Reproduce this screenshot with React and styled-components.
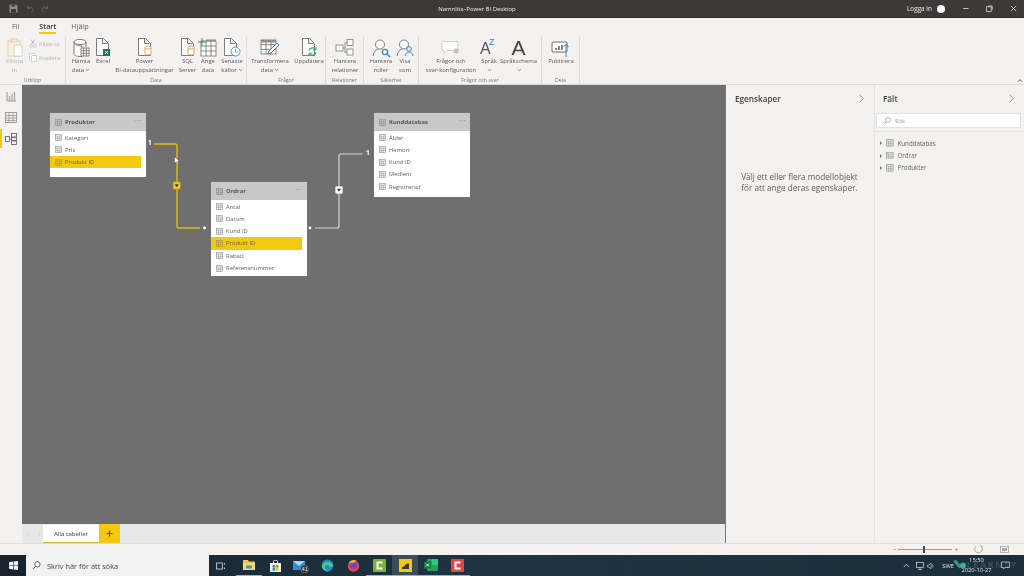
import React from "react";
import styled, { createGlobalStyle } from "styled-components";

const Global = createGlobalStyle`
  html, body { margin: 0; padding: 0; background: #f3f2f1; }
  #root { width: 1024px; height: 576px; overflow: hidden; }
  * { box-sizing: border-box; }
`;

const Page = styled.div`
  width: 1024px; height: 576px; display: flex; flex-direction: column;
  font-family: "Open Sans", "Noto Sans", sans-serif; color: #555;
  background: #f3f2f1; overflow: hidden; filter: blur(0.4px);
`;

/* Title bar */
const TitleBar = styled.div`
  height: 18px; flex: none; background: #3b3a39; display: flex; align-items: center;
  padding-left: 9px; color: #f3f2f1; font-size: 6px; border-bottom: 1px solid #2f2e2d;
`;
const QuickIcons = styled.div`display: flex; gap: 7.5px; width: 240px; align-items: center;`;
const Title = styled.div`width: 456px; text-align: center;`;
const Login = styled.div`margin-left: 202px; width: 25px; white-space: nowrap; font-size: 6.4px;`;
const Avatar = styled.div`width: 8px; height: 8px; margin-left: 5px; border-radius: 50%; background: #fff;`;
const WinButtons = styled.div`display: flex; margin-left: 16.5px; gap: 17px; align-items: center;`;

/* Ribbon */
const Ribbon = styled.div`
  height: 67px; flex: none; background: #f3f2f1; border-bottom: 1px solid #dcdbda;
  display: flex; flex-direction: column; position: relative;
`;
const TabRow = styled.div`height: 18px; flex: none; display: flex; font-size: 7.2px; padding-left: 12px; color: #666;`;
const RibbonTab = styled.div`
  margin-right: ${p => p.$mr}px; height: 16px; padding-top: 4px; line-height: 9px;
  ${p => p.$active && "color:#333;font-weight:600;border-bottom:2px solid #f2c811;"}
`;
const Groups = styled.div`flex: 1; display: flex; min-height: 0;`;
const Group = styled.div`
  width: ${p => p.$w}px; flex: none; border-right: 1px solid #dedddc; display: flex; flex-direction: column;
`;
const GroupTools = styled.div`flex: 1; display: flex; padding-left: ${p => p.$pl || 0}px;`;
const GroupName = styled.div`height: 6px; font-size: 5.2px; line-height: 5px; text-align: center; color: #777; white-space: nowrap;`;
const Tool = styled.div`
  width: ${p => p.$w}px; flex: none; display: flex; flex-direction: column; align-items: center;
  font-size: 5.9px; line-height: 8.7px; text-align: center; color: ${p => p.$off ? "#b5b4b3" : "#5a5958"};
  white-space: nowrap;
`;
const IconSlot = styled.div`height: 21px; padding-top: 2px; margin-bottom: 0; display: flex; justify-content: center; flex: none;`;
const SmallStack = styled.div`
  display: flex; flex-direction: column; gap: 3px; padding-top: 2px; font-size: 5.9px; color: #b5b4b3; white-space: nowrap;
`;
const SmallTool = styled.div`display: flex; align-items: center; gap: 2px; height: 11px;`;
const Collapse = styled.div`position: absolute; right: 1px; bottom: 1px; line-height: 0;`;
const LangIcon = styled.div`width: 18px; height: 19px; position: relative;`;
const LangA = styled.span`
  position: absolute; left: 0; top: 3px; font: 400 16px/16px "Liberation Sans", sans-serif; color: #555;
`;
const LangZ = styled.span`
  position: absolute; left: 9px; top: 0; font: 400 9px/9px "Liberation Sans", sans-serif; color: #3f86c4;
`;
const BigA = styled.span`font: 400 21px/19px "Liberation Sans", sans-serif; color: #444; display: block; height: 19px;`;

/* Main */
const Main = styled.div`flex: 1; display: flex; min-height: 0;`;
const Nav = styled.div`width: 22px; flex: none; display: flex; flex-direction: column; padding-top: 2px; gap: 2px;`;
const NavItem = styled.div`
  height: 19px; display: flex; align-items: center; justify-content: center;
  border-left: 2px solid ${p => p.$active ? "#f2c811" : "transparent"}; padding-right: 2px;
`;
const Center = styled.div`width: 703px; flex: none; display: flex; flex-direction: column;`;
const Canvas = styled.div`flex: 1; background: #6f6f6f; position: relative; overflow: hidden;`;
const Wires = styled.svg`position: absolute; left: 0; top: 0; width: 703px; height: 440px;`;
const Node = styled.div`
  position: absolute; left: ${p => p.$x - 22}px; top: ${p => p.$y - 85}px; width: 96px; height: ${p => p.$h}px;
  background: #fff; box-shadow: 0 0 1px #8a8a8a; color: #636261; font-size: 5.9px;
`;
const NodeHead = styled.div`
  height: 18.4px; background: #c8c8c8; display: flex; align-items: center; padding: 0 4px 0 5px; gap: 3px;
  font-weight: 700; color: #555; font-size: 5.9px;
`;
const NodeMore = styled.div`margin-left: auto; color: #8d8d8d; font-size: 6px; letter-spacing: 0.6px; line-height: 4px; height: 8px;`;
const NodeRow = styled.div`
  height: 12.3px; width: 91px; display: flex; align-items: center; padding-left: 5px; gap: 3px;
  background: ${p => p.$hl ? "#f2c811" : "transparent"};
`;
const Card = styled.div`
  position: absolute; left: ${p => p.$x - 22}px; top: ${p => p.$y - 85}px;
  color: #fff; font-size: 6.5px; font-weight: 700; line-height: 8px;
`;
const Pointer = styled.svg`position: absolute; left: ${174 - 22}px; top: ${156 - 85}px;`;

const TabBar = styled.div`height: 19px; flex: none; background: #e8e8e8; display: flex; align-items: stretch;`;
const TabArrow = styled.div`width: 11px; display: flex; align-items: center; justify-content: center; line-height: 0;`;
const PageTab = styled.div`
  width: 56px; margin-left: -1px; background: #fff; border-bottom: 1px solid #e0b80f; border-top: 1px solid #efefef;
  font-size: 5.9px; color: #666; display: flex; align-items: center; justify-content: center; font-weight: 600;
`;
const AddTab = styled.div`width: 21px; background: #f2c811; display: flex; align-items: center; justify-content: center; line-height: 0;`;

const Panel = styled.div`
  width: ${p => p.$w}px; flex: none; display: flex; flex-direction: column; background: #f3f2f1;
  border-left: ${p => p.$line}; padding-top: 6px;
`;
const PanelHead = styled.div`
  height: 14px; flex: none; display: flex; align-items: center; justify-content: space-between;
  padding: 0 ${p => p.$pr}px 0 ${p => p.$pl}px; font-size: 8.2px; color: #444; font-weight: 600;
`;
const Hint = styled.div`margin-top: 66px; text-align: center; font-size: 8.2px; line-height: 11px; color: #5f5e5d; padding-right: 1px;`;
const SearchBox = styled.div`
  margin: 8px 3px 0 1px; height: 15px; background: #fff; border: 1px solid #e3e3e3; display: flex; align-items: center;
  padding-left: 6px; gap: 4px; font-size: 6px; color: #9a9a9a;
`;
const Tree = styled.div`border-top: 1px solid #e3e2e1; margin-top: 3px; padding-top: 5px; padding-left: 5px;`;
const TreeRow = styled.div`height: 12.4px; display: flex; align-items: center; font-size: 6.2px; color: #666; gap: 4px;`;
const Caret = styled.div`
  width: 0; height: 0; border-left: 2.5px solid #777; border-top: 2px solid transparent; border-bottom: 2px solid transparent; margin-right: 0;
`;

const Status = styled.div`
  height: 12px; flex: none; background: #f3f2f1; border-top: 1px solid #dedddc; display: flex; align-items: center;
  padding-left: 893px;
`;
const Zoom = styled.div`display: flex; align-items: center; gap: 2px; font-size: 6px; color: #666; width: 80px;`;
const ZoomLine = styled.div`width: 54px; height: 1px; background: #999; position: relative;`;
const ZoomThumb = styled.div`position: absolute; left: 25px; top: -3px; width: 2px; height: 7px; background: #444;`;
const StatusIcons = styled.div`display: flex; gap: 17px; align-items: center; margin-left: 1px;`;

/* Taskbar */
const Taskbar = styled.div`
  height: 21px; flex: none; background: linear-gradient(90deg,#17252f,#1f3443 50%,#1c2e3c); display: flex; align-items: stretch; color: #e6e6e6;
`;
const StartBtn = styled.div`width: 26px; flex: none; display: flex; align-items: center; justify-content: center; background: #17242d;`;
const SearchBar = styled.div`
  width: 183px; flex: none; background: #f2f2f2; display: flex; align-items: center; gap: 6px; padding-left: 6px;
  font-size: 7.4px; color: #444;
`;
const TaskIcons = styled.div`display: flex;`;
const TaskIcon = styled.div`
  width: ${p => p.$w || 26}px; flex: none; display: flex; align-items: center; justify-content: center;
  padding-right: ${p => p.$pr || 0}px;
  ${p => p.$open && "border-bottom:1.5px solid #76b9ed;"}
  ${p => p.$active && "background:#3c4c59;"}
`;
const Tray = styled.div`margin-left: auto; display: flex; align-items: center; font-size: 5.8px; position: relative; padding-right: 14px;`;
const TrayItem = styled.div`margin-right: ${p => p.$mr}px; display: flex; line-height: 0;`;
const Clock = styled.div`width: 44px; text-align: center; line-height: 9.5px; font-size: 5.8px; padding-right: 5px;`;
const Watermark = styled.div`
  position: absolute; right: 6px; top: 5px; font-size: 9px; letter-spacing: 1.6px; font-weight: 700; color: rgba(255,255,255,.14); line-height: 10px; white-space: nowrap;
`;
const Check = styled.svg`position: absolute; left: 50px; top: 4px;`;

/* Icons */
const S = "#6e6d6c";
const Ic = ({ children, w = 20, h = 20 }) => <svg width={w} height={h} viewBox={`0 0 ${w} ${h}`} fill="none">{children}</svg>;
const Paper = ({ x = 3, h = 16, w = 12 }) => (
  <path d={`M${x + .5} .5h${w - 5}l5 5v${h - 5}h-${w}z M${x + w - 5.5} .5v5h5`} stroke={S} fill="#fff" strokeWidth=".9" />
);
const TableMini = ({ x, y, w = 8, h = 7, c = S }) => (
  <g stroke={c} strokeWidth=".8">
    <rect x={x} y={y} width={w} height={h} fill="#fff" />
    <path d={`M${x} ${y + h / 3}h${w}M${x} ${y + 2 * h / 3}h${w}M${x + w / 3} ${y}v${h}M${x + 2 * w / 3} ${y}v${h}`} />
  </g>
);
const Cyl = ({ x, y, c = "#d69a4d" }) => (
  <g stroke={c} strokeWidth=".9" fill="#fff"><path d={`M${x} ${y + 1.5}v6a3 1.5 0 0 0 6 0v-6`} /><ellipse cx={x + 3} cy={y + 1.5} rx="3" ry="1.5" /></g>
);
const IPaste = () => <Ic><g stroke="#ecc9a0" strokeWidth="1" fill="#f8f1e8"><rect x="3" y="3" width="12" height="15" /><rect x="6" y="1" width="6" height="3" /></g><rect x="9" y="7" width="8" height="11" fill="#fff" stroke="#cfcfcf" strokeWidth=".9" /></Ic>;
const IDb = () => <Ic><path d="M3 4v12c0 1.5 3 2.5 6 2.5h2V8C7 8 3 6 3 4z" fill="#fff" stroke={S} strokeWidth=".9" /><ellipse cx="9" cy="4" rx="6" ry="2.6" fill="#fff" stroke={S} strokeWidth=".9" /><path d="M15 4v5" stroke={S} strokeWidth=".9" /><TableMini x={10} y={10} w={8} h={8} /></Ic>;
const IExcel = () => <Ic><Paper x={3} h={17} w={12} /><rect x="10" y="11" width="7" height="7" fill="#1f7a43" /><path d="M12 13l3 3M15 13l-3 3" stroke="#fff" strokeWidth=".9" /></Ic>;
const IDocDb = () => <Ic><Paper x={3} h={17} w={12} /><Cyl x={10} y={8} /></Ic>;
const IEnter = () => <Ic><TableMini x={3} y={3} w={15} h={15} /><path d="M0 4h8M4 0v8" stroke="#2f9a5a" strokeWidth="1" /><rect x="8" y="1.5" width="10" height="2" fill="#8f8e8d" /></Ic>;
const IRecent = () => <Ic><Paper x={2} h={17} w={12} /><circle cx="13.5" cy="13.5" r="4.5" fill="#fff" stroke="#3f86c4" strokeWidth=".9" /><path d="M13.5 11v3h2.4" stroke="#3f86c4" strokeWidth=".8" /></Ic>;
const ITransform = () => <Ic><TableMini x={1} y={2} w={15} h={14} /><rect x="1" y="2" width="15" height="2.5" fill="#8f8e8d" /><path d="M8 16l1-3 8-8 2 2-8 8z" fill="#fff" stroke="#3f86c4" strokeWidth="1" /></Ic>;
const IRefresh = () => <Ic><Paper x={3} h={17} w={12} /><path d="M10 12.5a3.6 3.6 0 0 1 6.5-1M17 14.5a3.6 3.6 0 0 1-6.5 1" stroke="#3aa655" strokeWidth="1.1" fill="none" /><path d="M17 9v3h-3M10 18v-3h3" stroke="#3aa655" strokeWidth=".9" /></Ic>;
const IRel = () => <Ic><g stroke="#8a8988" strokeWidth=".9" fill="#fff"><rect x="1" y="7" width="7" height="6" /><rect x="12" y="1.5" width="6" height="6" /><rect x="12" y="11" width="6" height="6" /><path d="M8 10h2M10 4.5v10M10 4.5h2M10 14.5h2" fill="none" /></g></Ic>;
const IRole = ({ see }) => <Ic><circle cx="9" cy="6.5" r="4.5" stroke={S} strokeWidth=".9" fill="#fff" /><path d="M2 18c.6-4 3-6.4 5-7" stroke={S} strokeWidth=".9" />{see ? <g stroke="#3f86c4" strokeWidth="1" fill="none"><circle cx="14" cy="11" r="2.3" /><path d="M10 18c.4-2.6 2-4 4-4s3.6 1.4 4 4" /></g> : <g stroke="#3f86c4" strokeWidth="1.3"><circle cx="14" cy="14" r="2.6" fill="#fff" /><path d="M16 16l3 3" /></g>}</Ic>;
const IChat = () => <Ic><path d="M1 3.5h16v9h-11l-3 3v-3h-2z" fill="#fff" stroke="#d3d2d1" strokeWidth="1" /><circle cx="15" cy="13" r="2.6" fill="#c4c3c2" /></Ic>;
const IPublish = () => <Ic><rect x="1" y="4" width="15" height="10" rx="1" fill="#fff" stroke={S} strokeWidth="1" /><path d="M5 12v-2M8 12v-4M11 12v-5" stroke="#444" strokeWidth="1.3" /><path d="M15 19v-12M12.5 9l2.5-3 2.5 3" stroke="#3f86c4" strokeWidth="1" /></Ic>;
const Chevron = styled.svg`margin-left: 1px;`;
const Down = () => <Chevron width="5" height="4" viewBox="0 0 5 4" fill="none"><path d="M.8 1l1.7 1.7L4.2 1" stroke="#666" strokeWidth=".7" /></Chevron>;
const GridSvg = styled.svg`flex: none;`;
const Grid = ({ s = 8, c = "#9a9a9a" }) => (
  <GridSvg width={s} height={s} viewBox="0 0 8 8" fill="none">
    <rect x=".4" y=".4" width="7.2" height="7.2" fill={c} fillOpacity=".15" stroke={c} strokeWidth=".7" />
    <path d="M0 2.4h8M2.8 2.4v5.6M5.2 2.4v5.6M0 5h8" stroke={c} strokeWidth=".6" />
  </GridSvg>
);
const Chev = () => <svg width="5" height="9" viewBox="0 0 5 9" fill="none"><path d="M.6.6l3.6 3.9L.6 8.4" stroke="#777" strokeWidth=".8" /></svg>;
const Marker = ({ x, y, fill, tri, stroke }) => (
  <g><rect x={x - 3.5} y={y - 3.5} width="7" height="7" rx="1" fill={fill} stroke={stroke} strokeWidth=".6" /><path d={`M${x - 2} ${y - 1.2}h4l-2 3z`} fill={tri} /></g>
);

const ToolB = ({ w, icon, lines, off, more }) => (
  <Tool $w={w} $off={off}>
    <IconSlot>{icon}</IconSlot>
    {lines.map((l, i) => <div key={i}>{l}{more && i === lines.length - 1 && <Down />}</div>)}
  </Tool>
);

const Table = ({ x, y, h, name, fields, hl }) => (
  <Node $x={x} $y={y} $h={h}>
    <NodeHead><Grid s={7} c="#8f8f8f" />{name}<NodeMore>···</NodeMore></NodeHead>
    {fields.map(f => <NodeRow key={f} $hl={f === hl}><Grid s={7} c={f === hl ? "#a89a55" : "#9a9a9a"} />{f}</NodeRow>)}
  </Node>
);

export default function App() {
  return (
    <Page>
      <Global />
      <TitleBar>
        <QuickIcons>
          <svg width="9" height="9" viewBox="0 0 9 9" fill="none"><path d="M.5.5h6.5l1.5 1.5v6.5h-8z" fill="#8d8c8b" /><rect x="2" y="5" width="5" height="3.5" fill="#3b3a39" /><rect x="2.5" y=".5" width="3.5" height="2" fill="#3b3a39" /></svg>
          <svg width="8" height="8" viewBox="0 0 8 8" fill="none"><path d="M1.5.8v2.7h2.7M1.5 3.5C3 1.5 6.5 2 7 4.5c.2 1.4-.7 2.6-2 3" stroke="#6d6c6b" strokeWidth=".8" /></svg>
          <svg width="8" height="8" viewBox="0 0 8 8" fill="none"><path d="M6.5.8v2.7H3.8M6.5 3.5C5 1.5 1.5 2 1 4.5c-.2 1.4.7 2.6 2 3" stroke="#6d6c6b" strokeWidth=".8" /></svg>
        </QuickIcons>
        <Title>Namnlös–Power BI Desktop</Title>
        <Login>Logga in</Login>
        <Avatar />
        <WinButtons>
          <svg width="7" height="7" viewBox="0 0 7 7"><path d="M1 3.5h5.5" stroke="#ddd" strokeWidth=".8" /></svg>
          <svg width="7" height="7" viewBox="0 0 7 7" fill="none"><rect x=".6" y="1.8" width="4.6" height="4.6" stroke="#ddd" strokeWidth=".8" /><path d="M2 1h4.2v4" stroke="#ddd" strokeWidth=".8" /></svg>
          <svg width="7" height="7" viewBox="0 0 7 7"><path d="M.8.8l5.4 5.4M6.2.8L.8 6.2" stroke="#ddd" strokeWidth=".8" /></svg>
        </WinButtons>
      </TitleBar>

      <Ribbon>
        <TabRow>
          <RibbonTab $mr={20}>Fil</RibbonTab>
          <RibbonTab $mr={15} $active>Start</RibbonTab>
          <RibbonTab $mr={0}>Hjälp</RibbonTab>
        </TabRow>
        <Groups>
          <Group $w={66}>
            <GroupTools>
              <ToolB w={29} off icon={<IPaste />} lines={["Klistra", "in"]} />
              <SmallStack>
                <SmallTool><svg width="8" height="9" viewBox="0 0 8 9" fill="none"><path d="M2 .5l3.5 5M6 .5l-3.5 5" stroke="#bbb" strokeWidth=".9" /><circle cx="2" cy="7" r="1.4" stroke="#c8c8c8" strokeWidth=".8" /><circle cx="6" cy="7" r="1.4" stroke="#c8c8c8" strokeWidth=".8" /></svg>Klipp ut</SmallTool>
                <SmallTool><svg width="8" height="9" viewBox="0 0 8 9" fill="none"><rect x=".5" y=".5" width="5" height="6" stroke="#ccc" strokeWidth=".8" fill="#fff" /><rect x="2.5" y="2.5" width="5" height="6" stroke="#ccc" strokeWidth=".8" fill="#fff" /></svg>Kopiera</SmallTool>
              </SmallStack>
            </GroupTools>
            <GroupName>Urklipp</GroupName>
          </Group>
          <Group $w={181}>
            <GroupTools $pl={1}>
              <ToolB w={28} icon={<IDb />} lines={["Hämta", "data"]} more />
              <ToolB w={16} icon={<IExcel />} lines={["Excel"]} />
              <ToolB w={67} icon={<IDocDb />} lines={["Power", "BI-datauppsättningar"]} />
              <ToolB w={19} icon={<IDocDb />} lines={["SQL", "Server"]} />
              <ToolB w={22} icon={<IEnter />} lines={["Ange", "data"]} />
              <ToolB w={26} icon={<IRecent />} lines={["Senaste", "källor"]} more />
            </GroupTools>
            <GroupName>Data</GroupName>
          </Group>
          <Group $w={79}>
            <GroupTools $pl={1}>
              <ToolB w={44} icon={<ITransform />} lines={["Transformera", "data"]} more />
              <ToolB w={34} icon={<IRefresh />} lines={["Uppdatera"]} />
            </GroupTools>
            <GroupName>Frågor</GroupName>
          </Group>
          <Group $w={38}>
            <GroupTools>
              <ToolB w={38} icon={<IRel />} lines={["Hantera", "relationer"]} />
            </GroupTools>
            <GroupName>Relationer</GroupName>
          </Group>
          <Group $w={55}>
            <GroupTools $pl={4}>
              <ToolB w={26} icon={<IRole />} lines={["Hantera", "roller"]} />
              <ToolB w={22} icon={<IRole see />} lines={["Visa", "som"]} />
            </GroupTools>
            <GroupName>Säkerhet</GroupName>
          </Group>
          <Group $w={123}>
            <GroupTools $pl={3}>
              <ToolB w={58} icon={<IChat />} lines={["Frågor och", "svar-konfiguration"]} />
              <Tool $w={18}>
                <IconSlot><LangIcon><LangA>A</LangA><LangZ>Z</LangZ></LangIcon></IconSlot>
                <div>Språk</div><div><Down /></div>
              </Tool>
              <Tool $w={41}>
                <IconSlot><BigA>A</BigA></IconSlot>
                <div>Språkschema</div><div><Down /></div>
              </Tool>
            </GroupTools>
            <GroupName>Frågor och svar</GroupName>
          </Group>
          <Group $w={38}>
            <GroupTools>
              <ToolB w={38} icon={<IPublish />} lines={["Publicera"]} />
            </GroupTools>
            <GroupName>Dela</GroupName>
          </Group>
        </Groups>
        <Collapse><svg width="6" height="5" viewBox="0 0 6 5" fill="none"><path d="M1 3.6L3 1.6l2 2" stroke="#444" strokeWidth=".9" /></svg></Collapse>
      </Ribbon>

      <Main>
        <Nav>
          <NavItem><svg width="11" height="11" viewBox="0 0 11 11" fill="none"><path d="M1 1v9M3.5 5v5M6 3v7M8.5 1v9M1 10h9" stroke="#a3a2a1" strokeWidth="1.2" /></svg></NavItem>
          <NavItem><svg width="12" height="11" viewBox="0 0 12 11" fill="none"><rect x=".5" y=".5" width="11" height="10" stroke="#8d8c8b" strokeWidth=".8" /><path d="M.5 3.5h11M.5 6h11M.5 8.4h11M4 .5v10M8 .5v10" stroke="#8d8c8b" strokeWidth=".7" /></svg></NavItem>
          <NavItem $active><svg width="12" height="12" viewBox="0 0 12 12" fill="none" stroke="#5f5e5d" strokeWidth=".8"><rect x=".5" y="3.5" width="4" height="5" /><rect x="6.5" y=".5" width="5" height="3.5" /><rect x="6.5" y="4.5" width="5" height="3" /><rect x="6.5" y="8" width="5" height="3.5" /><path d="M4.5 6h2" /></svg></NavItem>
        </Nav>
        <Center>
          <Canvas>
            <Wires viewBox="22 85 703 440" fill="none">
              <path d="M154 144H175a2 2 0 0 1 2 2V226a2 2 0 0 0 2 2H200" stroke="#e3bb12" strokeWidth="1.4" />
              <circle cx="204.5" cy="228" r="1.4" fill="#fff" />
              <Marker x={176.7} y={185.5} fill="#f2c811" stroke="#d5ae10" tri="#333" />
              <path d="M315 228H337a2 2 0 0 0 2-2V156a2 2 0 0 1 2-2H363" stroke="#d6d6d6" strokeWidth="1.2" />
              <circle cx="310" cy="228" r="1.4" fill="#fff" />
              <Marker x={339} y={190} fill="#fff" stroke="#ddd" tri="#333" />
            </Wires>
            <Table x={50} y={113} h={64} name="Produkter" fields={["Kategori", "Pris", "Produkt ID"]} hl="Produkt ID" />
            <Table x={211} y={182} h={94} name="Ordrar" fields={["Antal", "Datum", "Kund ID", "Produkt ID", "Rabatt", "Referensnummer"]} hl="Produkt ID" />
            <Table x={374} y={113} h={84} name="Kunddatabas" fields={["Ålder", "Hemort", "Kund ID", "Medlem", "Registrerad"]} />
            <Card $x={148} $y={139}>1</Card>
            <Card $x={366} $y={149}>1</Card>
            <Pointer width="6" height="9" viewBox="0 0 6 9"><path d="M.5.5v7l1.7-1.5 1.2 2.5 1.2-.6-1.1-2.4h2.2z" fill="#f4f4f4" stroke="#555" strokeWidth=".5" /></Pointer>
          </Canvas>
          <TabBar>
            <TabArrow><svg width="4" height="6" viewBox="0 0 4 6"><path d="M3 .5L.8 3 3 5.5" stroke="#c9c9c9" fill="none" strokeWidth=".8" /></svg></TabArrow>
            <TabArrow><svg width="4" height="6" viewBox="0 0 4 6"><path d="M1 .5L3.2 3 1 5.5" stroke="#c9c9c9" fill="none" strokeWidth=".8" /></svg></TabArrow>
            <PageTab>Alla tabeller</PageTab>
            <AddTab><svg width="7" height="7" viewBox="0 0 7 7"><path d="M3.5.5v6M.5 3.5h6" stroke="#6d5a06" strokeWidth="1.2" /></svg></AddTab>
          </TabBar>
        </Center>
        <Panel $w={149} $line="1px solid #777">
          <PanelHead $pl={9} $pr={10}>Egenskaper<Chev /></PanelHead>
          <Hint>Välj ett eller flera modellobjekt<br />för att ange deras egenskaper.</Hint>
        </Panel>
        <Panel $w={150} $line="1px solid #e4e3e2">
          <PanelHead $pl={8} $pr={10}>Fält<Chev /></PanelHead>
          <SearchBox>
            <svg width="8" height="8" viewBox="0 0 8 8" fill="none"><circle cx="5" cy="3" r="2.4" stroke="#999" strokeWidth=".7" /><path d="M3.2 4.8L.6 7.4" stroke="#999" strokeWidth=".8" /></svg>
            Sök
          </SearchBox>
          <Tree>
            {["Kunddatabas", "Ordrar", "Produkter"].map(n => (
              <TreeRow key={n}><Caret /><Grid s={7.5} />{n}</TreeRow>
            ))}
          </Tree>
        </Panel>
      </Main>

      <Status>
        <Zoom>−<ZoomLine><ZoomThumb /></ZoomLine>+</Zoom>
        <StatusIcons>
          <svg width="9" height="9" viewBox="0 0 9 9" fill="none"><path d="M2 1.2A3.8 3.8 0 1 0 7 1.2" stroke="#888" strokeWidth=".7" /><path d="M7 .2v1.6h1.4" stroke="#888" strokeWidth=".6" /></svg>
          <svg width="9" height="7" viewBox="0 0 9 7"><rect x=".4" y=".4" width="8.2" height="6.2" fill="#f8f8f8" stroke="#999" strokeWidth=".7" /><rect x="2" y="2" width="5" height="3" fill="#aaa" /></svg>
        </StatusIcons>
      </Status>

      <Taskbar>
        <StartBtn><svg width="9" height="9" viewBox="0 0 9 9" fill="#f0f0f0"><path d="M0 1.2l4-.6v3.6H0zM4.6.5L9 0v4.2H4.6zM0 4.8h4v3.6l-4-.6zM4.6 4.8H9V9l-4.4-.6z" /></svg></StartBtn>
        <SearchBar>
          <svg width="9" height="9" viewBox="0 0 9 9" fill="none"><circle cx="5.4" cy="3.4" r="2.7" stroke="#444" strokeWidth=".8" /><path d="M3.4 5.4L.7 8.2" stroke="#444" strokeWidth=".9" /></svg>
          Skriv här för att söka
        </SearchBar>
        <TaskIcons>
          <TaskIcon $w={27} $pr={3}><svg width="10" height="8" viewBox="0 0 10 8" fill="none"><rect x=".5" y="1" width="6" height="6" stroke="#ddd" strokeWidth=".8" /><path d="M8.5 1v1.5M8.5 4v.01M8.5 5.5V7" stroke="#ddd" strokeWidth=".9" /></svg></TaskIcon>
          <TaskIcon $open><svg width="12" height="10" viewBox="0 0 12 10"><path d="M0 0h5l1 1.5h6V10H0z" fill="#f3c44d" /><rect y="3" width="12" height="7" fill="#f7d978" /><rect x="3" y="5.5" width="6" height="3" fill="#3f8fcf" /></svg></TaskIcon>
          <TaskIcon><svg width="11" height="12" viewBox="0 0 11 12"><rect y="3" width="11" height="9" fill="#f5f5f5" /><path d="M3.5 3V1.5a2 1.5 0 0 1 4 0V3" stroke="#f5f5f5" fill="none" /><rect x="2.5" y="5" width="2.7" height="2.7" fill="#f25022" /><rect x="5.8" y="5" width="2.7" height="2.7" fill="#7fba00" /><rect x="2.5" y="8" width="2.7" height="2.7" fill="#00a4ef" /><rect x="5.8" y="8" width="2.7" height="2.7" fill="#ffb900" /></svg></TaskIcon>
          <TaskIcon><svg width="16" height="14" viewBox="0 0 16 14"><rect x="0" y="2" width="12" height="9" fill="#2f8fd6" /><path d="M0 2l6 5 6-5z" fill="#a9d8f5" /><circle cx="11.5" cy="10" r="4" fill="#333" stroke="#999" strokeWidth=".5" /><text x="8.8" y="12" fontSize="5.5" fill="#eee" fontFamily="Liberation Sans">41</text></svg></TaskIcon>
          <TaskIcon><svg width="13" height="13" viewBox="0 0 13 13"><circle cx="6.5" cy="6.5" r="6" fill="#1f86d0" /><path d="M1 7c1-5 9-6 11-1 0 2-2 2-4 2 1-3-5-3-4 1 .5 2 3 3.5 6 2.5a6 6 0 0 1-9-4.500z" fill="#52c77a" /></svg></TaskIcon>
          <TaskIcon><svg width="13" height="13" viewBox="0 0 13 13"><circle cx="6.500" cy="7" r="5.700" fill="#e8493a" /><circle cx="6.500" cy="6.500" r="3.500" fill="#7a3fc0" /><path d="M2 4c1-3 5-4 8-2-2 0-3 1-3 2-2-.5-4 0-5 0z" fill="#f9b12c" /></svg></TaskIcon>
          <TaskIcon $open><svg width="13" height="13" viewBox="0 0 13 13"><rect width="13" height="13" rx="1" fill="#74b72e" /><path d="M9.500 3.500H4.500v6h5" stroke="#fff" strokeWidth="2" fill="none" /></svg></TaskIcon>
          <TaskIcon $open $active><svg width="13" height="13" viewBox="0 0 13 13"><rect width="13" height="13" fill="#f2c811" /><path d="M3 10V8h1.500V7H6V5.500h1.500V4.500H10V10z" fill="#3b3a39" /></svg></TaskIcon>
          <TaskIcon $open><svg width="14" height="12" viewBox="0 0 14 12"><rect x="3" width="11" height="12" rx="1" fill="#21a366" /><rect x="8" y="0" width="6" height="6" fill="#33c481" /><rect y="2.500" width="7" height="7" fill="#107c41" /><path d="M2 4.500l3 3M5 4.500l-3 3" stroke="#fff" strokeWidth=".9" /></svg></TaskIcon>
          <TaskIcon $open><svg width="13" height="13" viewBox="0 0 13 13"><rect width="13" height="13" rx="1" fill="#e5473f" /><path d="M9.500 3.500H4.500v6h5" stroke="#fff" strokeWidth="2" fill="none" /></svg></TaskIcon>
        </TaskIcons>
        <Tray>
          <TrayItem $mr={5}><svg width="7" height="5" viewBox="0 0 7 5" fill="none"><path d="M.8 4L3.500 1.200 6.200 4" stroke="#ddd" strokeWidth=".8" /></svg></TrayItem>
          <TrayItem $mr={3}><svg width="9" height="8" viewBox="0 0 9 8" fill="none"><rect x="1.500" y=".5" width="7" height="5" stroke="#ddd" strokeWidth=".7" /><path d="M5 5.500V7.500M3 7.500h4" stroke="#ddd" strokeWidth=".7" /></svg></TrayItem>
          <TrayItem $mr={7}><svg width="8" height="8" viewBox="0 0 8 8" fill="none"><path d="M.5 3h1.500L4 1v6L2 5H.5z" stroke="#ddd" strokeWidth=".6" /><path d="M5.500 2.500a2.500 2.500 0 0 1 0 3" stroke="#ddd" strokeWidth=".6" /></svg></TrayItem>
          <TrayItem $mr={3}>SWE</TrayItem>
          <Clock>15:50<br />2020-10-27</Clock>
          <TrayItem $mr={0}><svg width="9" height="9" viewBox="0 0 9 9" fill="none"><path d="M.5 1h8v5.500H4L2.500 8V6.500h-2z" stroke="#ddd" strokeWidth=".7" /></svg></TrayItem>
          <Check width="14" height="11" viewBox="0 0 14 11"><path d="M1.500 1.500L7.500 8.500" stroke="#2f9a78" strokeWidth="3.400" /><circle cx="10" cy="6.500" r="3" fill="#3fae8c" /></Check>
          <Watermark>LEARNSY</Watermark>
        </Tray>
      </Taskbar>
    </Page>
  );
}
